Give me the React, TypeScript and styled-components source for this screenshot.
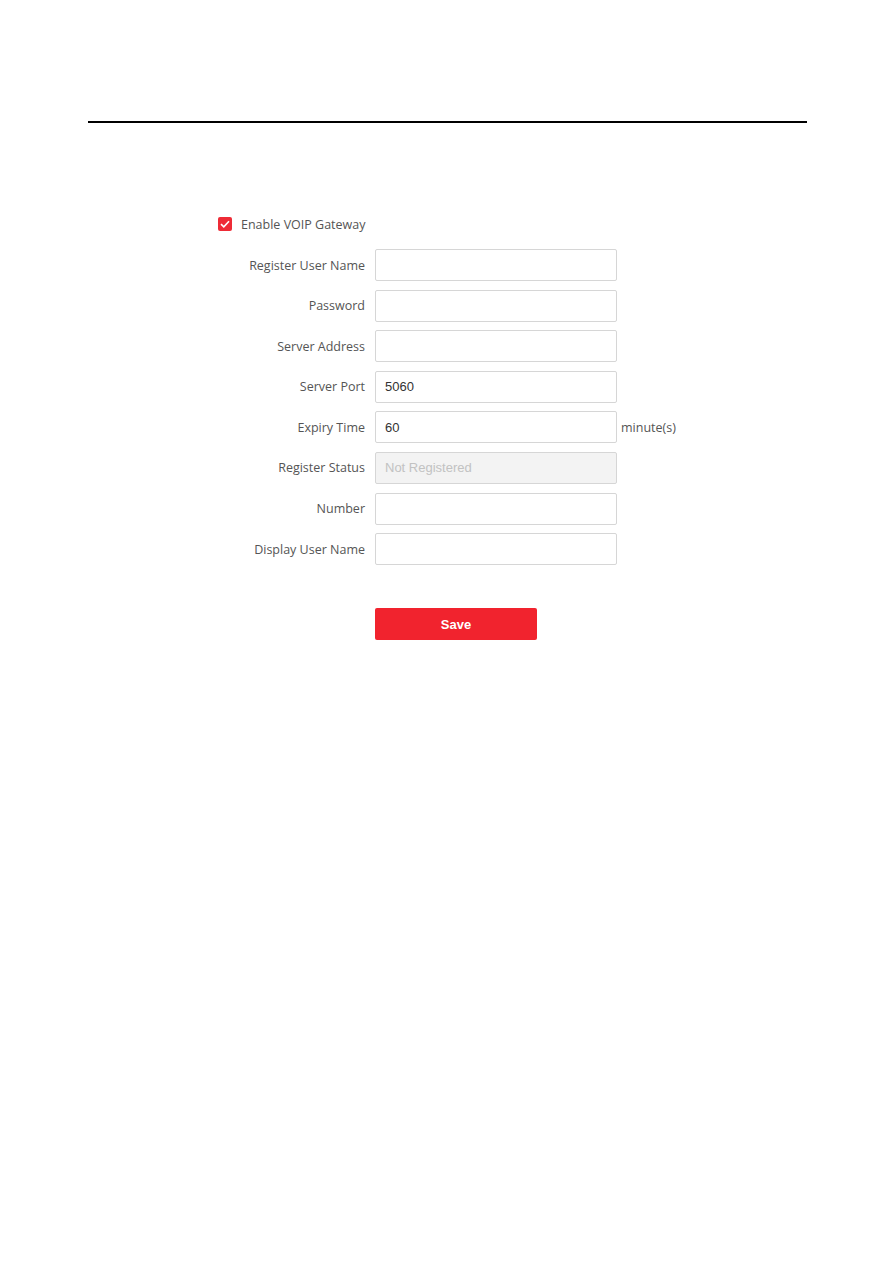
import styled, { createGlobalStyle } from 'styled-components';

type Field = {
  label: string;
  value?: string;
  disabled?: boolean;
  unit?: string;
};

const fields: Field[] = [
  { label: 'Register User Name' },
  { label: 'Password' },
  { label: 'Server Address' },
  { label: 'Server Port', value: '5060' },
  { label: 'Expiry Time', value: '60', unit: 'minute(s)' },
  { label: 'Register Status', value: 'Not Registered', disabled: true },
  { label: 'Number' },
  { label: 'Display User Name' },
];

function App() {
  return (
    <Page>
      <GlobalStyle />
      <Rule />
      <Form>
        <CheckRow>
          <CheckBox>
            <svg width="10" height="8" viewBox="0 0 10 8">
              <path d="M1 4.2 L3.8 6.8 L9 1.2" fill="none" stroke="#fff" strokeWidth="1.6" />
            </svg>
          </CheckBox>
          <CheckLabel>Enable VOIP Gateway</CheckLabel>
        </CheckRow>
        <Grid>
          {fields.map((f) => (
            <Row key={f.label}>
              <Label>{f.label}</Label>
              <Input defaultValue={f.value || ''} disabled={f.disabled} $disabled={f.disabled} />
              {f.unit ? <Unit>{f.unit}</Unit> : <span />}
            </Row>
          ))}
        </Grid>
        <SaveButton>Save</SaveButton>
      </Form>
    </Page>
  );
}

const GlobalStyle = createGlobalStyle`
  body {
    margin: 0;
    background: #fff;
    font-family: "Open Sans", "Liberation Sans", sans-serif;
  }
`;

const Page = styled.div`
  width: 883px;
  min-height: 1261px;
  padding-top: 121px;
  box-sizing: border-box;
`;

const Rule = styled.div`
  margin-left: 88px;
  width: 719px;
  height: 2px;
  background: #000;
`;

const Form = styled.div`
  margin-left: 205px;
  padding-top: 93px;
  display: flex;
  flex-direction: column;
`;

const CheckRow = styled.div`
  display: flex;
  align-items: center;
  gap: 9px;
  margin-left: 13px;
  height: 16px;
`;

const CheckBox = styled.span`
  width: 14px;
  height: 14px;
  border-radius: 2px;
  background: #ee2b36;
  display: flex;
  align-items: center;
  justify-content: center;
`;

const CheckLabel = styled.span`
  font-size: 12.5px;
  color: #555;
`;

const Grid = styled.div`
  margin-top: 17px;
  display: grid;
  grid-template-columns: 160px 242px auto;
  column-gap: 10px;
  row-gap: 8.6px;
`;

const Row = styled.div`
  display: contents;
`;

const Label = styled.label`
  font-size: 12.5px;
  color: #555;
  text-align: right;
  align-self: center;
`;

const Input = styled.input<{ $disabled?: boolean }>`
  box-sizing: border-box;
  width: 242px;
  height: 32px;
  padding: 0 9px;
  border: 1px solid #d6d6d6;
  border-radius: 2px;
  background: ${(p) => (p.$disabled ? '#f3f3f3' : '#fff')};
  color: ${(p) => (p.$disabled ? '#c2c2c2' : '#333')};
  font-family: "Liberation Sans", Arial, sans-serif;
  font-size: 13px;
  outline: none;
  &:disabled {
    -webkit-text-fill-color: #c2c2c2;
  }
`;

const Unit = styled.span`
  font-size: 12.5px;
  color: #555;
  align-self: center;
  margin-left: -6px;
`;

const SaveButton = styled.button`
  margin-top: 43px;
  margin-left: 170px;
  width: 162px;
  height: 32px;
  border: none;
  border-radius: 2px;
  background: #f1232e;
  color: #fff;
  font-family: "Liberation Sans", Arial, sans-serif;
  font-weight: bold;
  font-size: 13px;
  cursor: pointer;
`;

export default App;
